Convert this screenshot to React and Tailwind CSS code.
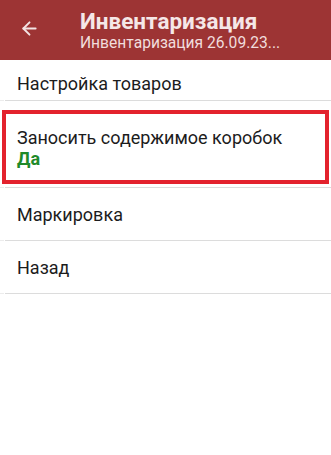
import { ArrowLeft } from 'lucide-react';

const Divider = () => (
  <div className="flex h-px">
    <span className="w-[4px] bg-[#ececec]" />
    <span className="ml-[1px] flex-1 bg-[#dcdcdc]" />
  </div>
);

const Row = ({ label }) => (
  <>
    <div className="flex h-[52px] items-center pl-[17px] text-[18px] text-[#1c1c1c]">
      {label}
    </div>
    <Divider />
  </>
);

const App = () => {
  return (
    <div
      className="h-[455px] w-[331px] overflow-hidden bg-white"
      style={{ fontFamily: 'Roboto, "Noto Sans", sans-serif' }}
    >
      <header className="flex h-[60px] items-center bg-[#9d3434]">
        <div className="flex w-[80px] items-center pl-[19px]">
          <ArrowLeft size={21} strokeWidth={2.2} className="mt-[-3px] text-[#f3e4e4]" />
        </div>
        <div className="flex flex-col">
          <h1 className="text-[22.5px] leading-[26px] font-bold text-[#f5e7e7]">Инвентаризация</h1>
          <p className="text-[15.6px] leading-[19px] text-[#f1dddd]">Инвентаризация 26.09.23...</p>
        </div>
      </header>

      <main>
        <div className="flex h-[40px] items-center pt-[6px] pl-[17px] text-[18px] text-[#1c1c1c]">
          Настройка товаров
        </div>
        <Divider />

        <div className="px-[2px] pt-[9px] pb-[3px]">
          <div className="border-4 border-[#e3222d] pt-[13px] pb-[11px] pl-[11px] text-[18px] leading-[21px]">
            <p className="text-[#1c1c1c]">Заносить содержимое коробок</p>
            <p className="font-bold text-[#1f8a2a]">Да</p>
          </div>
        </div>
        <Divider />

        <Row label="Маркировка" />
        <Row label="Назад" />
      </main>
    </div>
  );
};

export default App;
